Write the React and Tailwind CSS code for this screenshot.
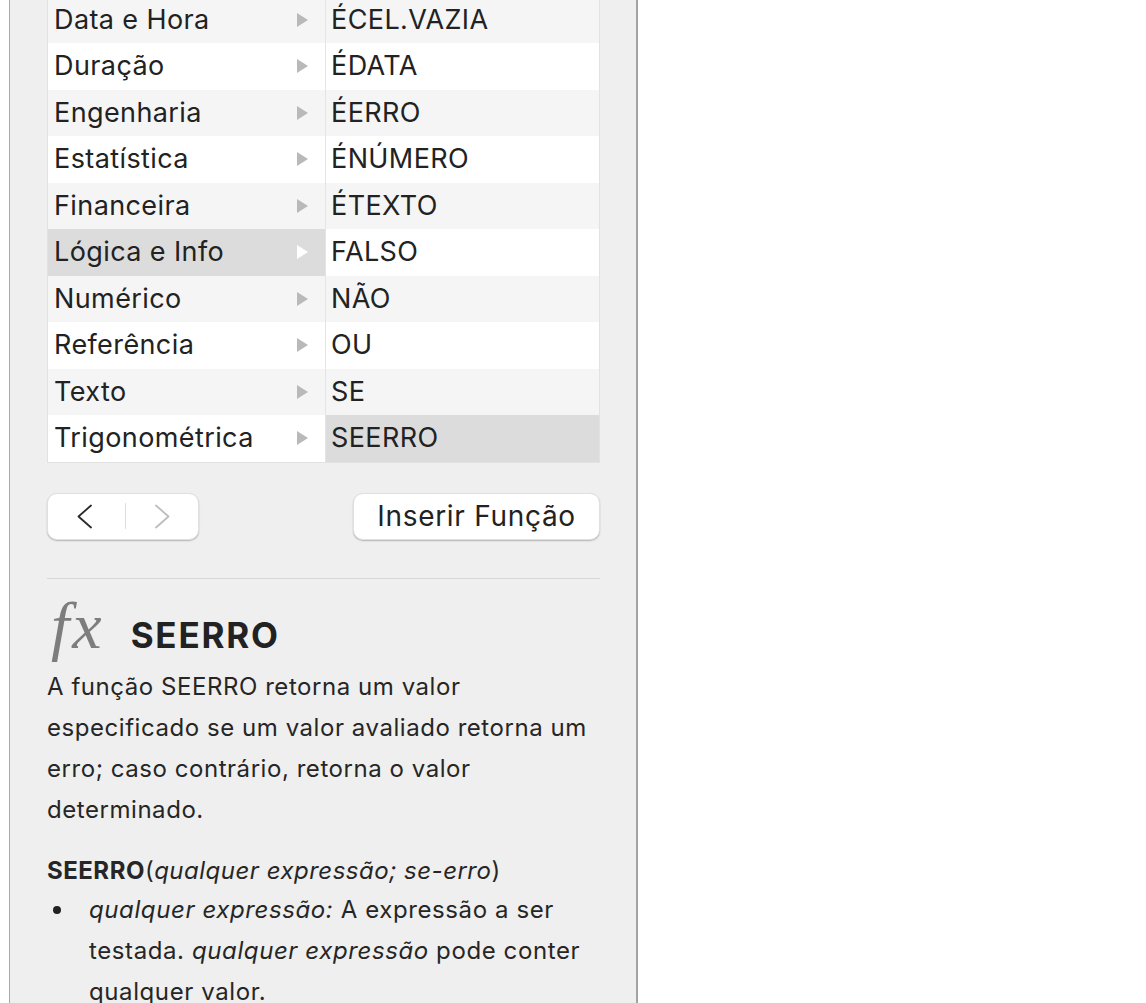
import React from 'react';

// --- function browser data ---
const categories = [
    'Data e Hora',
    'Duração',
    'Engenharia',
    'Estatística',
    'Financeira',
    'Lógica e Info',
    'Numérico',
    'Referência',
    'Texto',
    'Trigonométrica',
];

const functions = [
    'ÉCEL.VAZIA',
    'ÉDATA',
    'ÉERRO',
    'ÉNÚMERO',
    'ÉTEXTO',
    'FALSO',
    'NÃO',
    'OU',
    'SE',
    'SEERRO',
];

const selectedCategory = 5;
const selectedFunction = 9;

const Triangle = ({ white }) => (
    <svg width="11" height="14" viewBox="0 0 11 14" className="shrink-0">
        <path d="M0 0 L11 7 L0 14 Z" fill={white ? '#ffffff' : '#b9b9b9'} />
    </svg>
);

const FunctionList = () => (
    <div className="-mt-[3.5px] border border-[#e2e2e2] border-t-0 text-[27px] tracking-[0.4px]">
        {categories.map((cat, i) => {
            const stripe = i % 2 === 0 ? 'bg-[#f5f5f5]' : 'bg-white';
            const catSel = i === selectedCategory;
            const fnSel = i === selectedFunction;
            return (
                <div key={cat} className="flex h-[46.5px]">
                    <div className={`w-[277px] flex items-center justify-between pl-[6px] pr-[17px] ${catSel ? 'bg-[#dcdcdc]' : stripe}`}>
                        <span>{cat}</span>
                        <Triangle white={catSel} />
                    </div>
                    <div className={`flex-1 flex items-center pl-[5px] border-l border-[#e4e4e4] ${fnSel ? 'bg-[#dcdcdc]' : stripe}`}>
                        {functions[i]}
                    </div>
                </div>
            );
        })}
    </div>
);

const Buttons = () => (
    <div className="flex items-center justify-between mt-[30px]">
        <div className="w-[152px] h-[47px] bg-white rounded-[10px] shadow-[0_1px_1.5px_rgba(0,0,0,0.25)] border-[0.5px] border-[#e0e0e0] flex items-center">
            <div className="flex-1 flex items-center justify-center pr-[5px]">
                <svg width="17" height="25" viewBox="0 0 17 25">
                    <path d="M15 1.5 L2.5 12.5 L15 23.5" fill="none" stroke="#2a2a2a" strokeWidth="1.8" strokeLinecap="round" strokeLinejoin="round" />
                </svg>
            </div>
            <div className="w-px h-[26px] bg-[#dddddd]" />
            <div className="flex-1 flex items-center justify-center">
                <svg width="17" height="25" viewBox="0 0 17 25">
                    <path d="M2 1.5 L14.5 12.5 L2 23.5" fill="none" stroke="#bdbdbd" strokeWidth="1.8" strokeLinecap="round" strokeLinejoin="round" />
                </svg>
            </div>
        </div>
        <button className="w-[247px] h-[47px] bg-white rounded-[10px] shadow-[0_1px_1.5px_rgba(0,0,0,0.25)] border-[0.5px] border-[#e0e0e0] text-[28px] tracking-[0.7px] text-[#222] flex items-center justify-center">
            Inserir Função
        </button>
    </div>
);

export default function App() {
    return (
        <div className="w-full h-[1003px] bg-white overflow-hidden flex" style={{ fontFamily: 'Inter, "Noto Sans", sans-serif' }}>
            <div className="ml-[9px] w-[629px] h-full bg-[#efefef] border-l border-[#a8a8a8] border-r-2 border-r-[#a3a3a3] pl-[37px] pr-[36px] text-[#222]">
                <FunctionList />
                <Buttons />

                {/* separator */}
                <div className="mt-[38px] h-px bg-[#d6d6d6]" />

                {/* function detail */}
                <div className="flex items-baseline mt-[17px] h-[60px]">
                    <span className="text-[66px] leading-[60px] italic text-[#7d7d7d] pl-[4px] tracking-[3px]" style={{ fontFamily: '"Liberation Serif", serif' }}>
                        fx
                    </span>
                    <span className="ml-[26px] text-[35px] leading-[60px] font-bold tracking-[1.8px] text-[#222]">SEERRO</span>
                </div>

                <p className="mt-[10px] text-[24px] leading-[41px] tracking-[0.55px] text-[#262626] whitespace-nowrap">
                    A função SEERRO retorna um valor<br />
                    especificado se um valor avaliado retorna um<br />
                    erro; caso contrário, retorna o valor<br />
                    determinado.
                </p>

                <p className="mt-[20px] text-[24px] leading-[41px] tracking-[0.5px] text-[#262626]">
                    <span className="font-bold">SEERRO</span>(<i>qualquer expressão; se-erro</i>)
                </p>

                <ul className="-mt-[2px] text-[24px] leading-[41px] tracking-[0.6px] text-[#262626]">
                    <li className="flex">
                        <span className="w-[42px] shrink-0 flex items-start pt-[17px] pl-[6px]">
                            <span className="w-[8px] h-[8px] rounded-full bg-[#222]" />
                        </span>
                        <span className="whitespace-nowrap">
                            <i>qualquer expressão:</i> A expressão a ser<br />
                            testada. <i>qualquer expressão</i> pode conter<br />
                            qualquer valor.
                        </span>
                    </li>
                </ul>
            </div>
        </div>
    );
}
